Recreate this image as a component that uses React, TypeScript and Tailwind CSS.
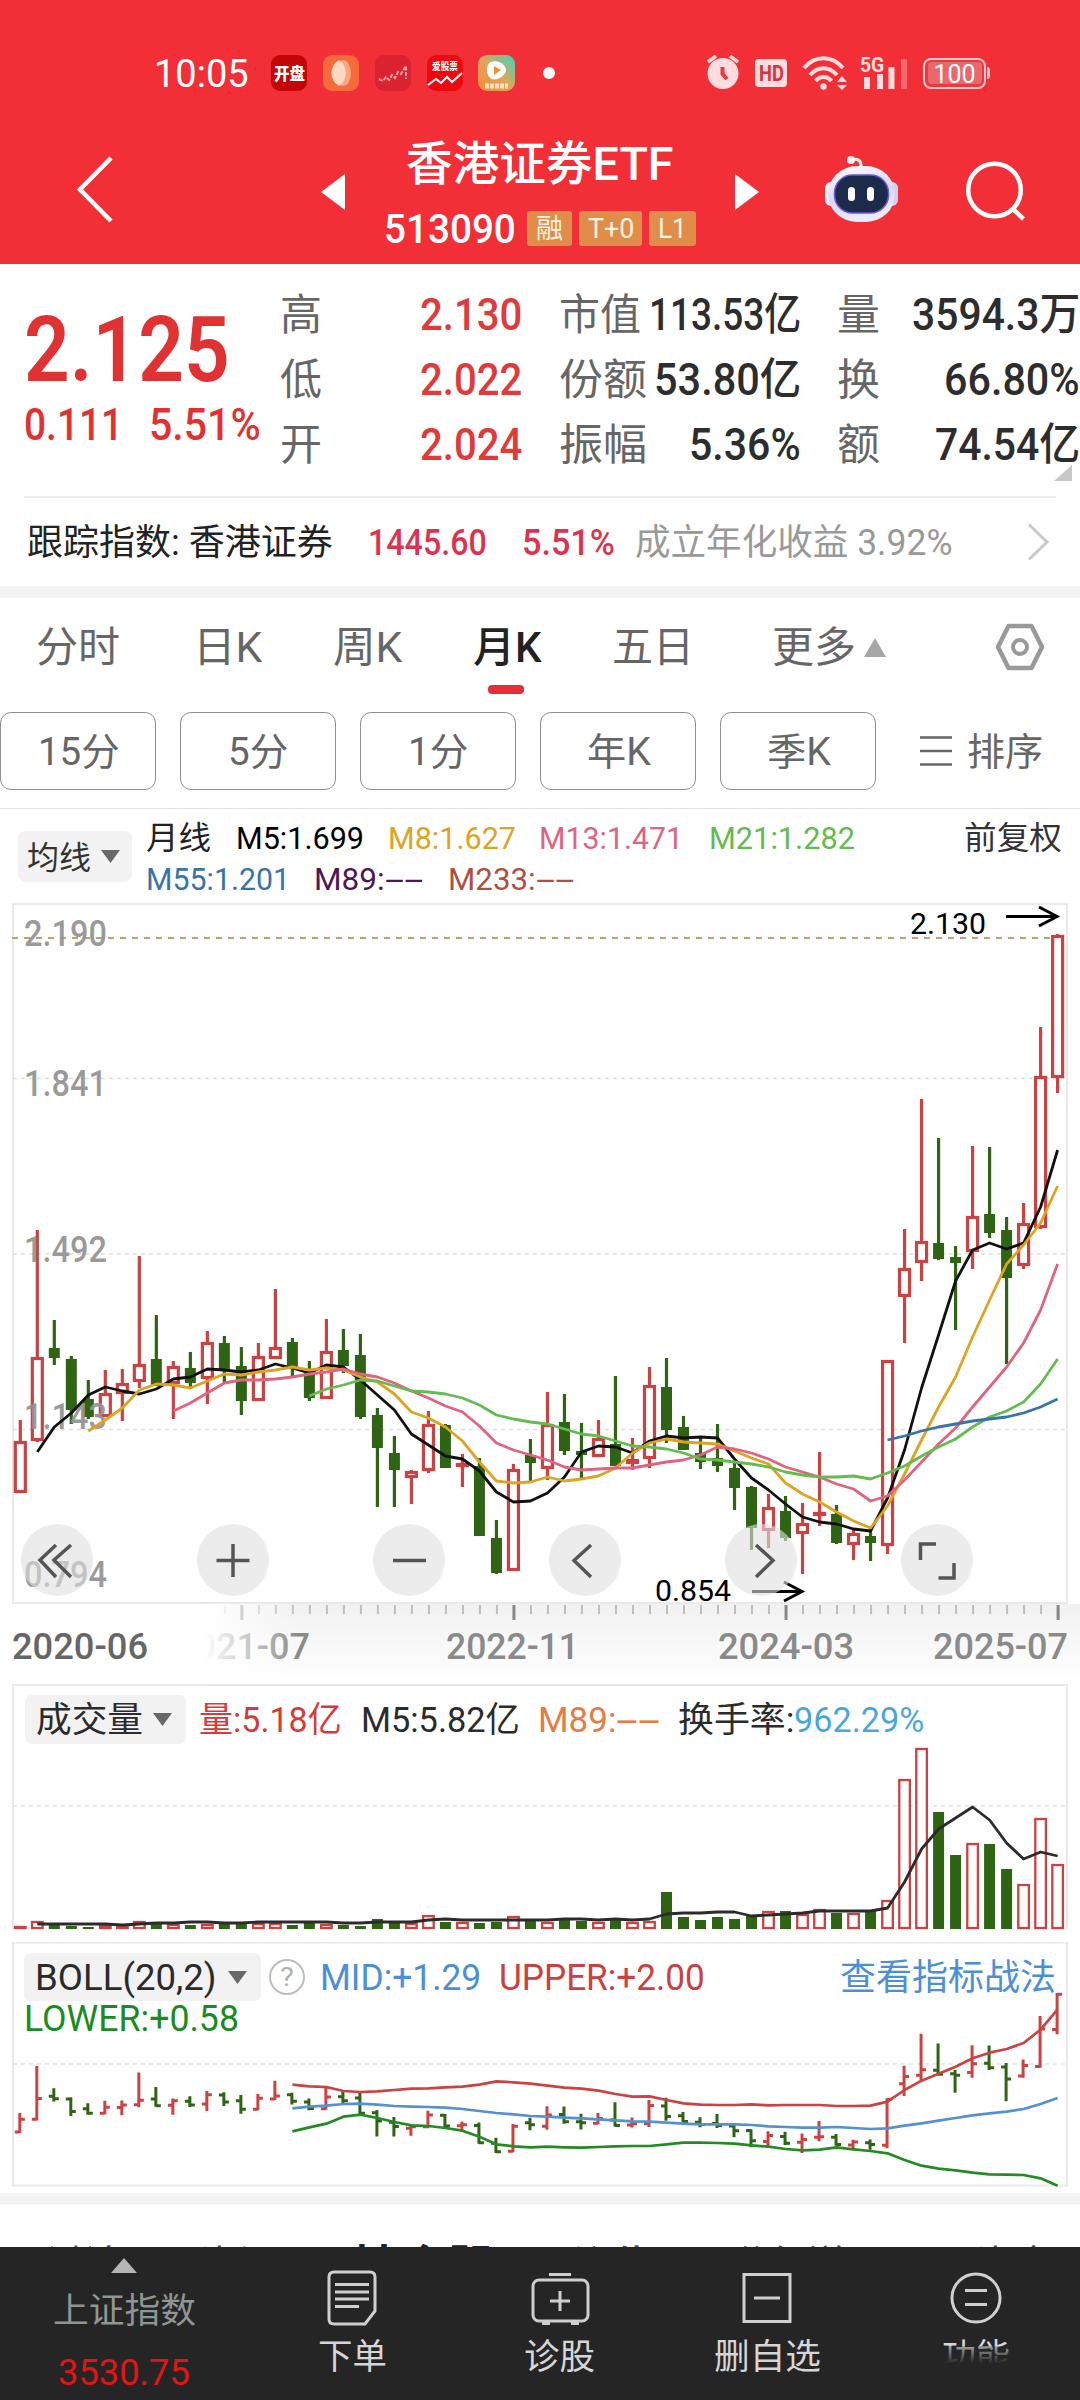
import React, { useLayoutEffect, useRef, useState } from 'react';

type Candle = [boolean, number, number, number, number];

// [up, high, body top, body bottom, low]
const CANDLES: Candle[] = [
  [true, 1420, 1441, 1493, 1493], [true, 1230, 1357, 1441, 1442], [false, 1320, 1348, 1358, 1365],
  [false, 1356, 1359, 1410, 1424], [false, 1380, 1399, 1417, 1419], [true, 1370, 1393, 1417, 1417],
  [true, 1369, 1383, 1394, 1421], [true, 1256, 1364, 1382, 1388], [false, 1315, 1359, 1386, 1386],
  [true, 1361, 1366, 1384, 1419], [false, 1352, 1368, 1383, 1387], [true, 1331, 1342, 1379, 1404],
  [false, 1336, 1343, 1371, 1383], [false, 1347, 1366, 1401, 1415], [true, 1343, 1356, 1401, 1401],
  [true, 1289, 1347, 1359, 1359], [false, 1338, 1342, 1368, 1377], [false, 1361, 1371, 1398, 1401],
  [true, 1319, 1351, 1399, 1399], [false, 1329, 1350, 1366, 1373], [false, 1334, 1355, 1417, 1419],
  [false, 1408, 1415, 1448, 1507], [false, 1436, 1453, 1470, 1507], [true, 1470, 1471, 1478, 1504],
  [true, 1411, 1424, 1471, 1473], [false, 1424, 1425, 1468, 1468], [true, 1454, 1463, 1467, 1487],
  [false, 1458, 1466, 1536, 1536], [false, 1520, 1538, 1573, 1574], [true, 1464, 1469, 1571, 1571],
  [false, 1439, 1455, 1463, 1482], [true, 1392, 1424, 1469, 1480], [false, 1394, 1422, 1451, 1455],
  [false, 1423, 1451, 1455, 1479], [true, 1420, 1438, 1457, 1457], [false, 1376, 1444, 1466, 1466],
  [true, 1438, 1459, 1464, 1470], [true, 1367, 1385, 1459, 1468], [false, 1358, 1387, 1430, 1443],
  [false, 1416, 1427, 1450, 1450], [false, 1437, 1453, 1462, 1469], [false, 1424, 1458, 1466, 1472],
  [false, 1463, 1468, 1488, 1510], [false, 1486, 1487, 1528, 1550], [true, 1494, 1507, 1531, 1548],
  [false, 1496, 1511, 1538, 1541], [true, 1503, 1523, 1534, 1574], [true, 1452, 1512, 1514, 1526],
  [false, 1505, 1514, 1543, 1544], [true, 1528, 1533, 1545, 1560], [false, 1527, 1536, 1543, 1561],
  [true, 1360, 1360, 1546, 1554], [true, 1229, 1268, 1297, 1343], [true, 1099, 1241, 1263, 1281],
  [false, 1138, 1243, 1259, 1260], [false, 1246, 1257, 1263, 1330], [true, 1146, 1216, 1252, 1269],
  [false, 1147, 1214, 1233, 1238], [false, 1217, 1230, 1278, 1364], [true, 1203, 1223, 1266, 1269],
  [true, 1027, 1076, 1228, 1229], [true, 934, 935, 1078, 1093],
];

const MA_LINES = [
  {
    color: '#111111', start: 1,
    ys: [1452, 1427, 1413, 1395, 1387, 1391, 1394, 1389, 1379, 1377, 1369, 1370, 1372, 1370, 1364, 1368, 1373, 1365, 1367, 1380, 1395, 1410, 1434, 1445, 1456, 1459, 1471, 1492, 1502, 1501, 1493, 1477, 1452, 1446, 1447, 1453, 1441, 1436, 1438, 1437, 1438, 1459, 1478, 1490, 1504, 1517, 1522, 1524, 1529, 1531, 1498, 1450, 1388, 1335, 1281, 1250, 1243, 1249, 1243, 1207, 1150],
  },
  {
    color: '#dfa322', start: 4,
    ys: [1431, 1420, 1408, 1390, 1384, 1385, 1388, 1381, 1374, 1375, 1372, 1370, 1367, 1370, 1368, 1370, 1377, 1382, 1394, 1412, 1418, 1427, 1441, 1462, 1481, 1483, 1482, 1477, 1481, 1479, 1476, 1468, 1453, 1443, 1439, 1442, 1443, 1444, 1451, 1458, 1464, 1483, 1494, 1502, 1512, 1521, 1528, 1506, 1474, 1440, 1407, 1377, 1337, 1300, 1264, 1245, 1223, 1186],
  },
  {
    color: '#e0647f', start: 9,
    ys: [1411, 1403, 1393, 1383, 1380, 1380, 1379, 1377, 1374, 1372, 1369, 1374, 1377, 1383, 1391, 1398, 1406, 1412, 1426, 1443, 1450, 1455, 1460, 1467, 1470, 1469, 1468, 1468, 1465, 1462, 1460, 1455, 1447, 1449, 1453, 1459, 1467, 1472, 1477, 1484, 1489, 1501, 1496, 1480, 1462, 1444, 1428, 1407, 1387, 1367, 1343, 1310, 1264],
  },
  {
    color: '#64bb4f', start: 17,
    ys: [1396, 1389, 1385, 1380, 1381, 1386, 1391, 1392, 1394, 1398, 1405, 1415, 1419, 1422, 1424, 1429, 1434, 1436, 1441, 1446, 1447, 1449, 1453, 1459, 1460, 1462, 1464, 1467, 1472, 1475, 1477, 1477, 1476, 1479, 1473, 1466, 1456, 1447, 1439, 1427, 1417, 1411, 1402, 1384, 1359],
  },
  {
    color: '#3775a8', start: 51,
    ys: [1440, 1436, 1431, 1427, 1424, 1421, 1419, 1417, 1413, 1407, 1399],
  },
];

// bar heights, in pixels above the volume baseline
const VOLUMES = [3, 8, 4, 3, 2, 4, 3, 8, 6, 5, 4, 5, 6, 5, 6, 6, 4, 6, 5, 4, 3, 10, 7, 6, 14, 7, 7, 6, 7, 13, 8, 7, 9, 8, 7, 9, 7, 8, 37, 12, 9, 12, 10, 13, 18, 18, 15, 20, 16, 16, 19, 29, 150, 181, 117, 74, 86, 85, 60, 45, 111, 65];
const VOLUME_MA = [5, 5, 5, 5, 5, 4, 5, 6, 6, 7, 7, 6, 6, 7, 7, 7, 7, 7, 6, 6, 7, 7, 7, 9, 10, 9, 9, 9, 9, 9, 9, 10, 10, 9, 10, 9, 10, 15, 16, 16, 17, 17, 13, 14, 15, 16, 18, 18, 18, 18, 21, 47, 80, 100, 111, 122, 109, 86, 70, 77, 73];

const BOLL_LINES = [
  {
    color: '#cb4242',
    ys: [464, 469, 471, 483, 486, 484, 480, 476, 475, 472, 470, 464, 454, 457, 461, 467, 473, 476, 482, 492, 500, 499, 510, 520, 524, 525, 525, 523, 526, 525, 525, 525, 528, 528, 527, 515, 480, 452, 431, 410, 385, 368, 357, 339, 299, 238],
  },
  {
    color: '#5590cf',
    ys: [535, 530, 527, 522, 521, 524, 528, 530, 531, 533, 537, 543, 549, 553, 558, 560, 563, 565, 568, 571, 574, 575, 578, 581, 583, 583, 583, 585, 589, 591, 593, 593, 591, 594, 597, 595, 587, 580, 572, 564, 556, 550, 545, 537, 522, 504],
  },
  {
    color: '#228b22',
    ys: [604, 592, 581, 560, 554, 564, 576, 586, 588, 594, 602, 620, 643, 649, 652, 650, 652, 653, 651, 649, 648, 648, 643, 638, 638, 639, 641, 646, 650, 657, 661, 659, 652, 658, 663, 670, 690, 707, 716, 721, 728, 733, 734, 735, 745, 767],
  },
];

const UP = '#cc4243';
const DOWN = '#2f6415';

const cx = (i: number) => 20.3 + i * 17.005;
const points = (ys: number[], start: number) => ys.map((y, i) => `${cx(start + i)},${y}`).join(' ');
const bollY = (y: number) => 1994 + (y - 934) * 0.247;

// Squeezes or stretches one line of text to the width of its box
function Fit({ className = '', children }: { className?: string; children: React.ReactNode }) {
  const box = useRef<HTMLSpanElement>(null);
  const text = useRef<HTMLSpanElement>(null);
  const [scale, setScale] = useState(1);

  useLayoutEffect(() => {
    if (box.current && text.current) {
      setScale(box.current.clientWidth / text.current.offsetWidth);
    }
  }, [children]);

  return (
    <span ref={box} className={`inline-block shrink-0 whitespace-nowrap ${className}`}>
      <span ref={text} className="inline-block origin-left" style={{ transform: `translateY(1px) scaleX(${scale})` }}>
        {children}
      </span>
    </span>
  );
}

function StatusBar() {
  return (
    <div className="flex h-[48px] items-center pl-[154px] text-white">
      <Fit className="w-[95px] text-[38px] leading-[48px]">10:05</Fit>
      <div className="ml-[22px] flex h-[36px] w-[36px] items-center justify-center rounded-[9px] bg-[#c40508]">
        <Fit className="w-[31px] text-[17px] font-black leading-[34px]">开盘</Fit>
      </div>
      <svg className="ml-[16px] rounded-[9px]" width="36" height="36" viewBox="0 0 36 36">
        <rect width="36" height="36" fill="#f76a3c" />
        <ellipse cx="20" cy="18" rx="8" ry="13" fill="#f9a77f" />
        <path d="M16 5 C25 11 25 25 16 31 C6 25 6 11 16 5Z" fill="#fdd9c0" />
      </svg>
      <svg className="ml-[16px] rounded-[9px]" width="36" height="36" viewBox="0 0 36 36" fill="none">
        <rect width="36" height="36" fill="#da2230" />
        <path d="M4 24 L8 26 L11 22 L14 25 L17 20 L20 23 L23 17 L26 19 L31 11 V24" stroke="#f6a5a8" strokeWidth="2" strokeDasharray="4 1.5" />
      </svg>
      <div className="ml-[16px] flex h-[36px] w-[36px] flex-col items-center rounded-[9px] bg-[#ea0a10] pt-[5px]">
        <Fit className="w-[26px] text-[10px] font-bold leading-[12px]">爱股票</Fit>
        <svg width="36" height="16" viewBox="0 0 36 16" fill="none">
          <path d="M1 13 L9 7 L14 11 L20 5 L25 10 L35 1" stroke="#fff" strokeWidth="2" />
        </svg>
      </div>
      <svg className="ml-[15px] rounded-[9px]" width="37" height="36" viewBox="0 0 37 36">
        <defs>
          <linearGradient id="player" x1="1" y1="0" x2="0" y2="1">
            <stop offset="0" stopColor="#39d8c0" />
            <stop offset="0.5" stopColor="#e0a45a" />
            <stop offset="1" stopColor="#f08a3c" />
          </linearGradient>
        </defs>
        <rect width="37" height="36" fill="url(#player)" />
        <path d="M13 7 C20 4 28 10 28 15 C28 20 20 26 14 24 C8 22 7 9 13 7Z" fill="#fff" />
        <path d="M16 11 L23 15 L16 20Z" fill="#e89436" />
        <path d="M7 31 H30" stroke="#ffe2b8" strokeWidth="5" strokeDasharray="4 1" />
      </svg>
      <span className="ml-[28px] h-[12px] w-[12px] rounded-full bg-white" />

      {/* Right side */}
      <svg className="ml-[150px]" width="36" height="36" viewBox="705 55 36 36" fill="none" stroke="#ffd9da" strokeLinecap="butt">
        <circle cx="723" cy="73.5" r="15.5" fill="#ffdcdd" stroke="none" />
        <path d="M708 62 L716 56 M730 56 L738 62" strokeWidth="3.5" />
        <path d="M722.5 67 V74 L727 79" stroke="#f1363c" strokeWidth="4" />
      </svg>
      <div className="ml-[14px] flex h-[28px] w-[32px] items-center justify-center rounded-[4px] bg-[#ffdcdd] text-[#d8323a]">
        <Fit className="w-[25px] text-[22px] font-bold leading-[26px]">HD</Fit>
      </div>
      <svg className="ml-[15px]" width="46" height="36" viewBox="802 53 46 36" fill="none" stroke="#ffdcdd" strokeWidth="4">
        <path d="M804 66 C815 53 832 53 843 66" />
        <path d="M810 73 C818 64 829 64 837 73" />
        <path d="M815.5 79 C820 73.5 827 73.5 831.5 79" />
        <circle cx="823.5" cy="84.5" r="3.2" fill="#ffdcdd" stroke="none" />
        <path d="M837 80 L842 74 L847 80Z M837 83 L842 88 L847 83Z" fill="#ffdcdd" stroke="none" />
      </svg>
      <div className="relative ml-[12px] h-[36px] w-[48px]">
        <Fit className="absolute left-0 top-0 w-[24px] text-[21px] font-bold leading-[18px] text-[#ffdcdd]">5G</Fit>
        <svg className="absolute inset-0" width="48" height="36" viewBox="860 53 48 36" fill="#ffdcdd">
          <path d="M864 75h6v12h-6z M877 72h6v15h-6z M888.5 65h6v22h-6z" />
          <path d="M901 57h6v30h-6z" fill="#f5686c" />
        </svg>
      </div>
      <div className="ml-[15px] flex h-[31px] w-[63px] items-center justify-center rounded-[8px] border-[2.5px] border-[#ffc9cb] bg-[#f1363c] text-white">
        <div className="flex h-[22px] w-[54px] items-center justify-center rounded-[4px] bg-[#e9686d]">
          <Fit className="w-[42px] text-[25px] leading-[21px]">100</Fit>
        </div>
      </div>
      <span className="ml-[1px] h-[12px] w-[3px] rounded-r-full bg-[#ffc9cb]" />
    </div>
  );
}

function Header() {
  return (
    <header className="h-[264px] bg-[#f22f37] pt-[49px] text-white">
      <StatusBar />
      <div className="flex h-[167px] pl-[74px]">
        <svg className="mt-[58px]" width="40" height="70" viewBox="74 155 40 70" fill="none">
          <path d="M111 158 L80 189.5 L111 221" stroke="#fff" strokeWidth="4.5" />
        </svg>
        <svg className="ml-[207px] mt-[77px]" width="24" height="36" viewBox="0 0 24 36"><path d="M24 0 V36 L0 18Z" fill="#fff" /></svg>
        <div className="ml-[39px] w-[311px] pt-[38px]">
          <div className="h-[55px] pl-[22px]">
            <Fit className="w-[268px] text-[47px] font-medium leading-[55px]">香港证券ETF</Fit>
          </div>
          <div className="mt-[21px] flex h-[34px] items-center">
            <Fit className="w-[132px] text-[41px] font-medium leading-[34px]">513090</Fit>
            <div className="ml-[11px] flex gap-[7px] text-[#fff4e4]">
              <span className="flex h-[35px] w-[45px] justify-center rounded-[3px] bg-[#e08d49]"><Fit className="w-[27px] text-[27px] leading-[34px]">融</Fit></span>
              <span className="flex h-[35px] w-[63px] justify-center rounded-[3px] bg-[#e08d49]"><Fit className="w-[46px] text-[28px] leading-[34px]">T+0</Fit></span>
              <span className="flex h-[35px] w-[47px] justify-center rounded-[3px] bg-[#e08d49]"><Fit className="w-[29px] text-[28px] leading-[34px]">L1</Fit></span>
            </div>
          </div>
        </div>
        <svg className="ml-[40px] mt-[77px]" width="24" height="36" viewBox="0 0 24 36"><path d="M0 0 V36 L24 18Z" fill="#fff" /></svg>
        <svg className="ml-[63px] mt-[57px]" width="78" height="72" viewBox="822 154 78 72">
          <defs>
            <linearGradient id="shell" x1="0" y1="0" x2="0.3" y2="1">
              <stop offset="0" stopColor="#ffffff" />
              <stop offset="0.6" stopColor="#d9d6f8" />
              <stop offset="1" stopColor="#eeeafd" />
            </linearGradient>
          </defs>
          <path d="M851 160 Q862 157 861 168" fill="none" stroke="#fff0f2" strokeWidth="3" />
          <circle cx="851" cy="160" r="4" fill="#fff0f2" />
          <rect x="825" y="182" width="12" height="24" rx="6" fill="#f2effe" />
          <rect x="886" y="182" width="12" height="24" rx="6" fill="#d4cdf4" />
          <rect x="828" y="166" width="67" height="56" rx="29" fill="url(#shell)" />
          <rect x="834.5" y="175" width="54" height="38" rx="18" fill="#1d2b4b" stroke="#6a5ad8" strokeWidth="1.5" />
          <rect x="848" y="187" width="7" height="14" rx="3.5" fill="#fff" />
          <rect x="867" y="187" width="7" height="14" rx="3.5" fill="#fff" />
        </svg>
        <svg className="ml-[64px] mt-[61px]" width="64" height="66" viewBox="964 158 64 66" fill="none" stroke="#fff" strokeWidth="4.5">
          <circle cx="994.5" cy="190" r="26.3" />
          <path d="M1013 209 L1023.5 219" />
        </svg>
      </div>
    </header>
  );
}

function Stat({ label, labelClass, value, valueClass }: { label: string; labelClass: string; value: string; valueClass: string }) {
  return (
    <div className="flex h-[65px] items-center justify-between leading-[65px]">
      <Fit className={`text-[43px] text-[#666666] ${labelClass}`}>{label}</Fit>
      <Fit className={`text-[44px] font-medium ${valueClass}`}>{value}</Fit>
    </div>
  );
}

function Quote() {
  return (
    <section>
      <div className="relative flex h-[232px]">
        <div className="w-[280px] pl-[24px] pt-[40px] text-[#e03232]">
          <Fit className="w-[206px] text-[91px] font-semibold leading-[90px]">2.125</Fit>
          <div className="flex pt-[5px] text-[44px] font-medium leading-[50px]">
            <Fit className="w-[99px]">0.111</Fit>
            <Fit className="ml-[26px] w-[112px]">5.51%</Fit>
          </div>
        </div>
        <div className="w-[242px] pt-[18px]">
          <Stat label="高" labelClass="w-[42px]" value="2.130" valueClass="w-[102px] text-[#e03a3a]" />
          <Stat label="低" labelClass="w-[42px]" value="2.022" valueClass="w-[102px] text-[#e03a3a]" />
          <Stat label="开" labelClass="w-[42px]" value="2.024" valueClass="w-[102px] text-[#e03a3a]" />
        </div>
        <div className="ml-[37px] w-[242px] pt-[18px] text-[#2d2d2d]">
          <Stat label="市值" labelClass="w-[82px]" value="113.53亿" valueClass="w-[152px]" />
          <Stat label="份额" labelClass="w-[88px]" value="53.80亿" valueClass="w-[147px]" />
          <Stat label="振幅" labelClass="w-[88px]" value="5.36%" valueClass="w-[112px]" />
        </div>
        <div className="ml-[36px] w-[243px] pt-[18px] text-[#2d2d2d]">
          <Stat label="量" labelClass="w-[43px]" value="3594.3万" valueClass="w-[168px]" />
          <Stat label="换" labelClass="w-[43px]" value="66.80%" valueClass="w-[136px]" />
          <Stat label="额" labelClass="w-[43px]" value="74.54亿" valueClass="w-[145px]" />
        </div>
        <svg className="absolute left-[1054px] top-[201px]" width="18" height="16" viewBox="0 0 18 16"><path d="M18 0 V16 H0Z" fill="#c8c8c8" /></svg>
      </div>
      <div className="mx-[24px] h-[2px] bg-[#ededed]" />
      <div className="flex h-[88px] items-center pl-[27px] text-[36px] leading-[60px]">
        <Fit className="w-[306px] text-[#222222]">跟踪指数: 香港证券</Fit>
        <Fit className="ml-[35px] w-[119px] font-medium text-[#dd3350]">1445.60</Fit>
        <Fit className="ml-[35px] w-[93px] font-medium text-[#dd3350]">5.51%</Fit>
        <Fit className="ml-[20px] w-[318px] text-[#999999]">成立年化收益 3.92%</Fit>
        <svg className="ml-[74px]" width="24" height="38" viewBox="0 0 24 38" fill="none"><path d="M2 1.5 L20 19 L2 36.5" stroke="#c9c9c9" strokeWidth="3" /></svg>
      </div>
    </section>
  );
}

const PERIODS = ['15分', '5分', '1分', '年K', '季K'];
const PERIOD_WIDTHS = ['w-[82px]', 'w-[60px]', 'w-[60px]', 'w-[64px]', 'w-[64px]'];

function Tabs() {
  return (
    <section className="border-t-[12px] border-[#f3f3f3]">
      <nav className="flex h-[98px] items-center pl-[36px] text-[42px] leading-[98px] text-[#666666]">
        <Fit className="w-[84px]">分时</Fit>
        <Fit className="ml-[73px] w-[69px]">日K</Fit>
        <Fit className="ml-[71px] w-[69px]">周K</Fit>
        <span className="relative ml-[71px] text-[#222222]">
          <Fit className="w-[69px] font-medium">月K</Fit>
          <span className="absolute bottom-[2px] left-[15px] h-[9px] w-[36px] rounded-[4px] bg-[#e23137]" />
        </span>
        <Fit className="ml-[70px] w-[82px]">五日</Fit>
        <Fit className="ml-[78px] w-[84px]">更多</Fit>
        <svg className="ml-[8px]" width="22" height="19" viewBox="0 0 22 19"><path d="M11 0 L22 19 H0Z" fill="#a6a6a6" /></svg>
        <svg className="ml-[108px]" width="52" height="50" viewBox="0 0 52 50" fill="none" stroke="#999999" strokeLinejoin="round">
          <path d="M14.5 4 H37.5 L48 25 L37.5 46 H14.5 L4 25Z" strokeWidth="4.5" />
          <circle cx="26" cy="25" r="7" strokeWidth="4" />
        </svg>
      </nav>
      <div className="mt-[16px] flex h-[78px] items-center gap-[24px] text-[38px] leading-[76px] text-[#666666]">
        {PERIODS.map((p, i) => (
          <button key={p} className="flex h-[78px] w-[156px] items-center justify-center rounded-[11px] border border-[#8f8f8f]">
            <Fit className={PERIOD_WIDTHS[i]}>{p}</Fit>
          </button>
        ))}
        <div className="ml-[20px] flex items-center">
          <svg width="32" height="30" viewBox="0 0 32 30"><path d="M0 1.5 H32 M0 15 H32 M0 28.5 H32" stroke="#666666" strokeWidth="2.5" /></svg>
          <Fit className="ml-[15px] w-[76px]">排序</Fit>
        </div>
      </div>
      <div className="mt-[18px] h-px bg-[#e2e2e2]" />
    </section>
  );
}

function Caret({ className = '' }: { className?: string }) {
  return <svg className={className} width="19" height="13" viewBox="0 0 19 13"><path d="M0 0 H19 L9.5 13Z" fill="#686868" /></svg>;
}

function PriceLegend() {
  return (
    <div className="flex h-[94px] pl-[18px] text-[32px]">
      <div className="mt-[22px] flex h-[51px] w-[114px] items-center rounded-[8px] bg-[#f2f2f2] pl-[9px] leading-[50px] text-[#333333]">
        <Fit className="w-[64px]">均线</Fit>
        <Caret className="ml-[10px]" />
      </div>
      <div className="ml-[14px] pt-[8px] leading-[41px]">
        <div className="flex">
          <Fit className="w-[65px] text-[#222222]">月线</Fit>
          <Fit className="ml-[25px] w-[128px] text-[#000000]">M5:1.699</Fit>
          <Fit className="ml-[24px] w-[128px] text-[#dfa322]">M8:1.627</Fit>
          <Fit className="ml-[23px] w-[144px] text-[#e0647f]">M13:1.471</Fit>
          <Fit className="ml-[26px] w-[146px] text-[#64bb4f]">M21:1.282</Fit>
          <Fit className="ml-[109px] w-[98px] text-[#333333]">前复权</Fit>
        </div>
        <div className="flex">
          <Fit className="w-[144px] text-[#3775a8]">M55:1.201</Fit>
          <Fit className="ml-[24px] w-[71px] text-[#4f1556]">M89:</Fit>
          <Fit className="w-[39px] text-[#4f1556]">--</Fit>
          <Fit className="ml-[24px] w-[88px] text-[#ae4f3f]">M233:</Fit>
          <Fit className="w-[39px] text-[#ae4f3f]">--</Fit>
        </div>
      </div>
    </div>
  );
}

const PRICE_LABELS = [
  { text: '2.190', y: 946 },
  { text: '1.841', y: 1096 },
  { text: '1.492', y: 1262 },
  { text: '1.143', y: 1429 },
  { text: '0.794', y: 1587 },
];

const TOOL_ICONS = [
  'M35 21 L19 36 L35 53 M50 21 L33 36 L50 53',
  'M36 20 V53 M19.5 36.5 H52.5',
  'M20 36.5 H53',
  'M42 21 L25 36.5 L42 53',
  'M31 21 L48 36.5 L31 53',
  'M19.5 36 V20 H35 M53 39 V54 H37.5',
];

function PriceChart() {
  return (
    <div className="relative z-10 h-[701px]">
      <svg className="block overflow-visible" width="1080" height="701" viewBox="0 903 1080 701" fill="none">
        <rect x="13" y="904" width="1054" height="699" stroke="#e9e9e9" strokeWidth="2" />
        <path d="M13 1078.5 H1067 M13 1254 H1067 M13 1429.5 H1067" stroke="#dedede" strokeDasharray="4 4" strokeWidth="1.3" />
        <path d="M12 938 H1056" stroke="#bba174" strokeDasharray="6 6" strokeWidth="2" />
        {CANDLES.map(([up, high, top, bottom, low], i) => {
          const x = cx(i);
          return (
            <g key={i}>
              <path d={`M${x} ${high}V${top} M${x} ${bottom}V${low}`} stroke={up ? UP : DOWN} strokeWidth="3.2" />
              {up ? (
                <rect x={x - 5} y={top + 1.5} width="10" height={Math.max(bottom - top - 3, 1)} fill="#fff" stroke={UP} strokeWidth="3.2" />
              ) : (
                <rect x={x - 5.5} y={top} width="11" height={bottom - top} fill={DOWN} />
              )}
            </g>
          );
        })}
        <g fill="#949494" fillOpacity="0.95" fontSize="36" fontWeight="500">
          {PRICE_LABELS.map(l => (
            <text key={l.text} x="24" y={l.y} textLength="83" lengthAdjust="spacingAndGlyphs">{l.text}</text>
          ))}
        </g>
        {MA_LINES.map(l => (
          <polyline key={l.color} points={points(l.ys, l.start)} stroke={l.color} strokeWidth="2.8" strokeLinejoin="round" />
        ))}
        <g fill="#000" fontSize="30">
          <text x="910" y="933.5" textLength="76" lengthAdjust="spacingAndGlyphs">2.130</text>
          <text x="655" y="1601" textLength="76" lengthAdjust="spacingAndGlyphs">0.854</text>
        </g>
        <path d="M1006 916.5 H1057 M1039 907 L1057 916.5 L1039 926" stroke="#000" strokeWidth="3" />
        <path d="M752 1591.5 H802 M784 1582 L802 1591.5 L784 1601" stroke="#000" strokeWidth="3" />
      </svg>
      <div className="absolute left-[21px] top-[621px] flex gap-[104px]">
        {TOOL_ICONS.map(d => (
          <button key={d} className="h-[72px] w-[72px] rounded-full bg-[#e0e0e0]/60">
            <svg width="72" height="72" viewBox="0 0 72 72" fill="none"><path d={d} stroke="#555555" strokeWidth="3.5" /></svg>
          </button>
        ))}
      </div>
    </div>
  );
}

function TimeAxis() {
  return (
    <div className="relative h-[80px] bg-linear-to-b from-[#f1f1f1] to-white">
      <svg className="block" width="1080" height="20" viewBox="0 0 1080 20">
        {CANDLES.map((_, i) => i >= 12 && (
          <path key={i} d={`M${cx(i) + 0.5} 1V${i % 16 === 13 ? 16 : 10}`} stroke={i % 16 === 13 ? '#888888' : '#bdbdbd'} strokeWidth={i % 16 === 13 ? 3 : 2} />
        ))}
      </svg>
      <div className="flex pl-[175px] text-[36px] font-medium leading-[44px] text-[#8a8a8a]">
        <Fit className="w-[135px]">2021-07</Fit>
        <Fit className="ml-[136px] w-[133px]">2022-11</Fit>
        <Fit className="ml-[139px] w-[136px]">2024-03</Fit>
        <Fit className="ml-[79px] w-[135px]">2025-07</Fit>
      </div>
      <div className="absolute left-0 top-0 h-[80px] w-[300px] bg-linear-to-r from-white from-68% to-white/0 pl-[12px] pt-[20px] text-[36px] font-medium leading-[44px] text-[#666666]">
        <Fit className="w-[136px]">2020-06</Fit>
      </div>
    </div>
  );
}

function VolumeChart() {
  return (
    <div className="relative h-[258px] pl-[25px] pt-[11px]">
      <svg className="absolute inset-0" width="1080" height="258" viewBox="0 1684 1080 258" fill="none">
        <path d="M13 1929 V1685 H1067 V1929" stroke="#e9e9e9" strokeWidth="2" />
        <path d="M13 1806 H1067" stroke="#e2e2e2" strokeDasharray="4 4" strokeWidth="1.5" />
        {VOLUMES.map((v, i) => {
          const x = cx(i);
          if (!CANDLES[i][0]) return <rect key={i} x={x - 5.5} y={1929 - v} width="11" height={v} fill={DOWN} />;
          return <rect key={i} x={x - 5.3} y={1930 - v} width="10.6" height={Math.max(v - 2, 1)} fill="#fff" stroke={UP} strokeWidth="2.3" />;
        })}
        <polyline points={points(VOLUME_MA.map(v => 1929 - v), 1)} stroke="#2b2b2b" strokeWidth="2.8" strokeLinejoin="round" />
      </svg>
      <div className="relative flex h-[49px] items-center text-[35px] leading-[49px] text-[#2b2b2b]">
        <div className="flex h-[49px] w-[161px] items-center rounded-[7px] bg-[#f2f2f2] pl-[11px]">
          <Fit className="w-[107px]">成交量</Fit>
          <Caret className="ml-[10px]" />
        </div>
        <Fit className="ml-[13px] w-[143px] text-[#d83a3a]">量:5.18亿</Fit>
        <Fit className="ml-[19px] w-[159px]">M5:5.82亿</Fit>
        <Fit className="ml-[18px] w-[78px] text-[#e57c45]">M89:</Fit>
        <Fit className="w-[43px] text-[#e57c45]">--</Fit>
        <Fit className="ml-[19px] w-[116px]">换手率:</Fit>
        <Fit className="w-[130px] text-[#4aa7dc]">962.29%</Fit>
      </div>
    </div>
  );
}

function BollChart() {
  return (
    <div className="relative h-[251px] pl-[24px] pt-[11px]">
      <svg className="absolute inset-0" width="1080" height="251" viewBox="0 1942 1080 251" fill="none">
        <rect x="13" y="1942.5" width="1054" height="243" stroke="#e9e9e9" strokeWidth="2" />
        <path d="M13 2064 H1067" stroke="#e2e2e2" strokeDasharray="4 4" strokeWidth="1.3" />
        {CANDLES.map(([up, high, top, bottom, low], i) => {
          const x = cx(i) - 0.5;
          const open = bollY(up ? bottom : top);
          const close = bollY(up ? top : bottom);
          return (
            <path
              key={i}
              d={`M${x} ${bollY(high) - 1}V${bollY(low) + 1} M${x - 5} ${open}H${x} M${x} ${close}H${x + 5}`}
              stroke={up ? UP : DOWN}
              strokeWidth="3"
            />
          );
        })}
        {BOLL_LINES.map(l => (
          <polyline key={l.color} points={points(l.ys.map(y => 1930 + y / 3), 16)} stroke={l.color} strokeWidth="2.7" strokeLinejoin="round" />
        ))}
      </svg>
      <div className="relative flex h-[48px] items-center text-[36px] leading-[48px]">
        <div className="flex h-[48px] w-[237px] items-center rounded-[7px] bg-[#f2f2f2] pl-[11px] text-[#2b2b2b]">
          <Fit className="w-[182px]">BOLL(20,2)</Fit>
          <Caret className="ml-[11px]" />
        </div>
        <div className="ml-[8px] flex h-[36px] w-[36px] items-center justify-center rounded-full border-[2.5px] border-[#bdbdbd] text-[#b0b0b0]">
          <Fit className="w-[14px] text-[25px] leading-[30px]">?</Fit>
        </div>
        <Fit className="ml-[15px] w-[161px] text-[#4d8fd6]">MID:+1.29</Fit>
        <Fit className="ml-[18px] w-[206px] text-[#cb4040]">UPPER:+2.00</Fit>
        <Fit className="ml-[135px] w-[216px] text-[#4d8fd6]">查看指标战法</Fit>
      </div>
      <Fit className="relative w-[215px] text-[36px] leading-[34px] text-[#1a8c1f]">LOWER:+0.58</Fit>
    </div>
  );
}

function BottomBar() {
  return (
    <footer className="flex h-[153px] bg-[#252525] text-[35px] text-[#d6d6d6]">
      <div className="flex w-[248px] flex-col items-center pt-[11px]">
        <svg width="26" height="15" viewBox="0 0 26 15"><path d="M13 0 L26 15 H0Z" fill="#b5b5b5" /></svg>
        <Fit className="mt-[15px] w-[143px] leading-[46px] text-[#8f9693]">上证指数</Fit>
        <Fit className="mt-[14px] w-[132px] text-[36px] leading-[48px] text-[#e01515]">3530.75</Fit>
      </div>
      <div className="flex w-[208px] flex-col items-center pt-[20px]">
        <svg width="54" height="60" viewBox="0 0 54 60" fill="none" stroke="#cfcfcf" strokeWidth="3">
          <path d="M9 5 H45 Q50 5 50 10 V44 L40 57 H9 Q4 57 4 52 V10 Q4 5 9 5Z" />
          <path d="M10 17.5 H44 M10 25 H44 M10 32 H44 M10 39.5 H34" strokeWidth="2.8" />
        </svg>
        <Fit className="mt-[7px] w-[69px] leading-[46px]">下单</Fit>
      </div>
      <div className="flex w-[207px] flex-col items-center pt-[20px]">
        <svg width="62" height="60" viewBox="0 0 62 60" fill="none" stroke="#cfcfcf" strokeWidth="3">
          <rect x="4" y="13" width="55" height="41" rx="6" />
          <path d="M20 7.5 H42 M31 24 V44 M21 34 H41 M13 56.5 H21 M42 56.5 H50" />
        </svg>
        <Fit className="mt-[7px] w-[71px] leading-[46px]">诊股</Fit>
      </div>
      <div className="flex w-[208px] flex-col items-center pt-[20px]">
        <svg width="52" height="60" viewBox="0 0 52 60" fill="none" stroke="#cfcfcf" strokeWidth="3">
          <path d="M3 7.5 H49 V54.5 H3Z M13 31 H39" />
        </svg>
        <Fit className="mt-[7px] w-[107px] leading-[46px]">删自选</Fit>
      </div>
      <div className="relative flex w-[209px] flex-col items-center pt-[20px]">
        <svg width="54" height="60" viewBox="0 0 54 60" fill="none" stroke="#cfcfcf" strokeWidth="3">
          <circle cx="27" cy="31" r="24" />
          <path d="M16 23.5 H38 M16 37.5 H38" />
        </svg>
        <Fit className="mt-[7px] w-[68px] leading-[46px]">功能</Fit>
        <span className="absolute left-0 top-[99px] h-[50px] w-full bg-linear-to-b from-[#252525]/30 to-[#252525] to-35%" />
      </div>
    </footer>
  );
}

export default function App() {
  return (
    <div className="h-[2400px] w-[1080px] overflow-hidden bg-white font-['Roboto','Noto_Sans_CJK_SC',sans-serif]">
      <Header />
      <Quote />
      <Tabs />
      <PriceLegend />
      <PriceChart />
      <TimeAxis />
      <VolumeChart />
      <BollChart />
      <div className="h-[12px] bg-[#f3f3f3]" />
      <div className="flex h-[42px] items-start overflow-hidden pl-[46px] pt-[33px] text-[38px] leading-[50px] text-[#555555]">
        <Fit className="w-[76px]">讨论</Fit>
        <Fit className="ml-[78px] w-[76px]">资讯</Fit>
        <Fit className="ml-[76px] w-[144px] pt-[3px] text-[44px] font-bold text-[#222222]">持仓股</Fit>
        <Fit className="ml-[66px] w-[98px]">公告</Fit>
        <Fit className="ml-[72px] w-[114px]">分红送</Fit>
        <Fit className="ml-[130px] w-[76px]">资金</Fit>
      </div>
      <BottomBar />
    </div>
  );
}
